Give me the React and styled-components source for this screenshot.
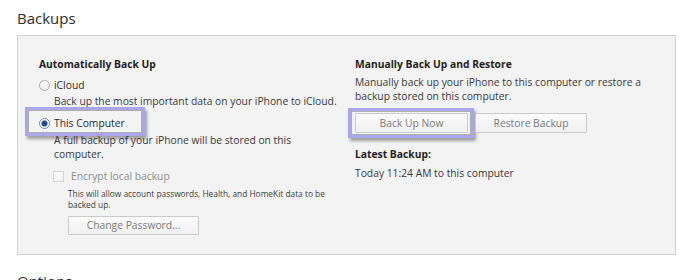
import React from "react";
import styled, { createGlobalStyle } from "styled-components";

const GlobalStyle = createGlobalStyle`
  html, body { margin: 0; padding: 0; background: #ffffff; }
  body {
    font-family: "Open Sans", "Noto Sans", sans-serif;
    color: #333333;
    width: 700px;
    height: 280px;
    overflow: hidden;
  }
`;

const Page = styled.div`
  padding: 8px 0 0 17px;
`;

const SectionTitle = styled.h2`
  margin: 0;
  font-size: 15px;
  line-height: 20px;
  font-weight: 400;
  color: #2b2b2b;
`;

const Panel = styled.div`
  margin: 7px 0 16px 0;
  width: 657px;
  height: 218px;
  background: #f3f3f3;
  border: 1px solid #d2d2d2;
  box-sizing: content-box;
  display: grid;
  grid-template-columns: 337px 1fr;
`;

const Column = styled.div`
  display: flex;
  flex-direction: column;
  padding: 21px 0 0 ${(p) => p.$pad}px;
`;

const Heading = styled.div`
  font-size: 10.3px;
  line-height: 14px;
  font-weight: 700;
  color: #1f1f1f;
  margin-top: ${(p) => p.$mt || 0}px;
`;

const Text = styled.div`
  font-size: 10.3px;
  line-height: 14px;
  color: #3a3a3a;
  margin-top: ${(p) => p.$mt || 0}px;
  margin-left: ${(p) => p.$ml || 0}px;
  max-width: ${(p) => p.$w || 300}px;
`;

const OptionRow = styled.label`
  position: relative;
  display: flex;
  align-items: center;
  gap: 4px;
  height: 14px;
  font-size: 10.3px;
  color: ${(p) => (p.$disabled ? "#8d8d8d" : "#2e2e2e")};
  margin-top: ${(p) => p.$mt || 0}px;
  margin-left: ${(p) => p.$ml || 0}px;
`;

const Radio = styled.span`
  box-sizing: border-box;
  width: 11px;
  height: 11px;
  border-radius: 50%;
  border: 1px solid ${(p) => (p.$checked ? "#7c8796" : "#a9a9a9")};
  background: ${(p) =>
    p.$checked
      ? "radial-gradient(circle, #1d4a8f 0 2.2px, #5d86c4 2.8px, #d6e2f3 3.4px, #ffffff 4.2px)"
      : "linear-gradient(#fdfdfd, #ececec)"};
  flex: none;
`;

const Checkbox = styled.span`
  box-sizing: border-box;
  width: 11px;
  height: 11px;
  border: 1px solid #d4d4d4;
  background: #f6f6f6;
  margin-right: 3px;
  flex: none;
`;

const SmallText = styled.div`
  font-size: 8.35px;
  line-height: 11px;
  color: #3c3c3c;
  margin-top: ${(p) => p.$mt || 0}px;
  margin-left: 29px;
  max-width: 268px;
`;

const Button = styled.button`
  position: relative;
  box-sizing: border-box;
  width: ${(p) => p.$w}px;
  height: ${(p) => p.$h || 20}px;
  padding: 0;
  border: 1px solid #cbcbcb;
  border-radius: 1px;
  background: linear-gradient(#fbfbfb, #f0f0f0);
  color: #7b7b7b;
  font-family: inherit;
  font-size: 10.3px;
  line-height: 1;
  flex: none;
`;

const ButtonRow = styled.div`
  display: flex;
  gap: 7px;
  margin-top: ${(p) => p.$mt || 0}px;
  margin-left: ${(p) => p.$ml || 0}px;
`;

const Highlight = styled.span`
  position: absolute;
  box-sizing: border-box;
  left: ${(p) => p.$l}px;
  top: ${(p) => p.$t}px;
  width: ${(p) => p.$w}px;
  height: ${(p) => p.$h}px;
  border: 3px solid #aaa6ee;
  box-shadow: 2px 3px 3px rgba(0, 0, 0, 0.35),
    inset 0 0 0 1px rgba(90, 90, 90, 0.45);
  pointer-events: none;
`;

export default function App() {
  return (
    <>
      <GlobalStyle />
      <Page>
        <SectionTitle>Backups</SectionTitle>
        <Panel>
          <Column $pad={21}>
            <Heading>Automatically Back Up</Heading>
            <OptionRow $mt={7}>
              <Radio />
              iCloud
            </OptionRow>
            <Text $mt={2} $ml={15} $w={305}>
              Back up the most important data on your iPhone to iCloud.
            </Text>
            <OptionRow $mt={8}>
              <Radio $checked />
              This Computer
              <Highlight $l={-14} $t={-9} $w={120} $h={29} />
            </OptionRow>
            <Text $mt={3} $ml={15} $w={305}>
              A full backup of your iPhone will be stored on this
              <br />
              computer.
            </Text>
            <OptionRow $mt={8} $ml={14} $disabled>
              <Checkbox />
              Encrypt local backup
            </OptionRow>
            <SmallText $mt={5}>
              This will allow account passwords, Health, and HomeKit data to be
              backed up.
            </SmallText>
            <ButtonRow $mt={6} $ml={29}>
              <Button $w={131} $h={19}>
                Change Password...
              </Button>
            </ButtonRow>
          </Column>
          <Column $pad={0}>
            <Heading>Manually Back Up and Restore</Heading>
            <Text $mt={4} $w={300}>
              Manually back up your iPhone to this computer or restore a backup
              stored on this computer.
            </Text>
            <ButtonRow $mt={10}>
              <Button $w={113}>
                Back Up Now
                <Highlight $l={-8} $t={-6} $w={126} $h={30} />
              </Button>
              <Button $w={112}>Restore Backup</Button>
            </ButtonRow>
            <Heading $mt={14}>Latest Backup:</Heading>
            <Text $mt={5}>Today 11:24 AM to this computer</Text>
          </Column>
        </Panel>
        <SectionTitle>Options</SectionTitle>
      </Page>
    </>
  );
}
